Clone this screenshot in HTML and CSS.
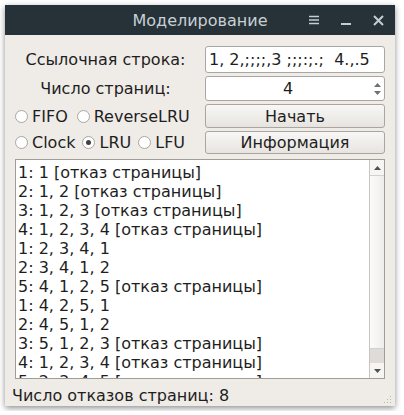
FILE: index.html
```html
<!DOCTYPE html>
<html lang="ru">

<head>
    <meta charset="UTF-8">
    <meta name="viewport" content="width=device-width, initial-scale=1.0">
    <link rel="stylesheet" href="styles.css">
</head>

<body>
    <div class="window">
        <div class="titlebar">
            <span></span>
            <span class="title">Моделирование</span>
            <div class="controls">
                <svg width="10" height="10" viewBox="0 0 10 10"><path d="M0 1.5h10M0 5h10M0 8.5h10" stroke="#c3cdd2" stroke-width="1.6"/></svg>
                <svg width="10" height="10" viewBox="0 0 10 10"><path d="M0 9h10" stroke="#c3cdd2" stroke-width="2"/></svg>
                <svg width="11" height="11" viewBox="0 0 11 11"><path d="M1 1l9 9M10 1l-9 9" stroke="#c3cdd2" stroke-width="2"/></svg>
            </div>
        </div>

        <div class="content">
            <div class="form">
                <span class="field-label">Ссылочная строка:</span>
                <div class="input">1, 2,;;;;,3 ;;;:;.;&nbsp;&nbsp;4.,.5</div>

                <span class="field-label">Число страниц:</span>
                <div class="input spin">
                    <span class="spin-value">4</span>
                    <div class="spin-arrows">
                        <svg width="7" height="4" viewBox="0 0 7 4"><path d="M0 4L3.5 0L7 4z" fill="#707070"/></svg>
                        <svg width="7" height="4" viewBox="0 0 7 4"><path d="M0 0L3.5 4L7 0z" fill="#707070"/></svg>
                    </div>
                </div>

                <div class="radios">
                    <label class="radio"><span class="dot"></span>FIFO</label>
                    <label class="radio"><span class="dot"></span>ReverseLRU</label>
                </div>
                <button class="btn">Начать</button>

                <div class="radios tight">
                    <label class="radio"><span class="dot"></span>Clock</label>
                    <label class="radio"><span class="dot checked"></span>LRU</label>
                    <label class="radio"><span class="dot"></span>LFU</label>
                </div>
                <button class="btn">Информация</button>
            </div>

            <div class="log">
                <div class="lines">
                    <div>1: 1 [отказ страницы]</div>
                    <div>2: 1, 2 [отказ страницы]</div>
                    <div>3: 1, 2, 3 [отказ страницы]</div>
                    <div>4: 1, 2, 3, 4 [отказ страницы]</div>
                    <div>1: 2, 3, 4, 1</div>
                    <div>2: 3, 4, 1, 2</div>
                    <div>5: 4, 1, 2, 5 [отказ страницы]</div>
                    <div>1: 4, 2, 5, 1</div>
                    <div>2: 4, 5, 1, 2</div>
                    <div>3: 5, 1, 2, 3 [отказ страницы]</div>
                    <div>4: 1, 2, 3, 4 [отказ страницы]</div>
                    <div>5: 2, 3, 4, 5 [отказ страницы]</div>
                </div>
                <div class="scrollbar">
                    <div class="arrow">
                        <svg width="7" height="4" viewBox="0 0 7 4"><path d="M0 4L3.5 0L7 4z" fill="#505050"/></svg>
                    </div>
                    <div class="thumb"></div>
                    <div class="track"></div>
                    <div class="arrow">
                        <svg width="7" height="4" viewBox="0 0 7 4"><path d="M0 0L3.5 4L7 0z" fill="#505050"/></svg>
                    </div>
                </div>
            </div>
        </div>

        <div class="status">
            <span>Число отказов страниц: 8</span>
            <svg class="grip" width="9" height="9" viewBox="0 0 9 9">
                <g fill="#b8b4b0">
                    <rect x="7" y="1" width="1" height="1"/>
                    <rect x="4" y="4" width="1" height="1"/><rect x="7" y="4" width="1" height="1"/>
                    <rect x="1" y="7" width="1" height="1"/><rect x="4" y="7" width="1" height="1"/><rect x="7" y="7" width="1" height="1"/>
                </g>
            </svg>
        </div>
    </div>
</body>

</html>
```

FILE: styles.css
```css
/* Page around the window */
body {
    margin: 0;
    background: #ffffff;
    font-family: "DejaVu Sans", sans-serif;
    font-size: 16px;
    color: #1e1e1e;
}

/* The window itself */
.window {
    margin: 5px;
    width: 390px;
    height: 401px;
    background: #efebe7;
    display: flex;
    flex-direction: column;
    box-shadow: 0 2px 6px rgba(0, 0, 0, 0.45);
}

/* Dark title bar */
.titlebar {
    height: 30px;
    background: #263238;
    display: grid;
    grid-template-columns: 1fr auto 1fr;
    align-items: center;
}

.title {
    color: #c6d0d5;
    font-size: 16px;
}

.controls {
    justify-self: end;
    display: flex;
    align-items: center;
    gap: 22px;
    padding-right: 11px;
}

/* Main area */
.content {
    flex: 1;
    display: flex;
    flex-direction: column;
    padding: 11px 10px 0 10px;
}

/* Form grid: labels on the left, fields on the right */
.form {
    display: grid;
    grid-template-columns: 1fr 180px;
    grid-template-rows: 27px 25px 24px 23px;
    row-gap: 3px;
    column-gap: 5px;
    align-items: center;
}

.field-label {
    text-align: center;
    padding-right: 4px;
}

.input {
    height: 100%;
    box-sizing: border-box;
    background: #ffffff;
    border: 1px solid #aaa6a2;
    border-radius: 3px;
    padding: 0 3px;
    display: flex;
    align-items: center;
    white-space: nowrap;
    overflow: hidden;
}

.spin {
    padding: 0;
}

.spin-value {
    flex: 1;
    text-align: center;
}

.spin-arrows {
    width: 14px;
    height: 100%;
    display: flex;
    flex-direction: column;
    justify-content: center;
    align-items: center;
    gap: 4px;
}

/* Radio buttons */
.radios {
    display: flex;
    align-items: center;
    gap: 9px;
}

.radios.tight {
    gap: 7px;
}

.radio {
    display: flex;
    align-items: center;
    gap: 4px;
}

.dot {
    width: 11px;
    height: 11px;
    border: 1px solid #aaa6a2;
    border-radius: 50%;
    background: #ffffff;
    display: flex;
    align-items: center;
    justify-content: center;
}

.dot.checked::after {
    content: "";
    width: 5px;
    height: 5px;
    border-radius: 50%;
    background: #404040;
}

/* Push buttons */
.btn {
    height: 100%;
    font: inherit;
    color: inherit;
    background: linear-gradient(#f8f7f5, #e7e4e0);
    border: 1px solid #a9a5a1;
    border-radius: 3px;
    padding: 0;
}

/* Log box */
.log {
    margin-top: 5px;
    height: 220px;
    box-sizing: border-box;
    background: #ffffff;
    border: 1px solid #a09c98;
    display: flex;
    overflow: hidden;
}

.lines {
    flex: 1;
    overflow: hidden;
    padding: 3px 2px 0 2px;
    line-height: 19px;
    white-space: nowrap;
}

.scrollbar {
    width: 14px;
    border-left: 1px solid #c8c4c0;
    display: flex;
    flex-direction: column;
}

.arrow {
    height: 15px;
    display: flex;
    align-items: center;
    justify-content: center;
    background: #f6f5f3;
}

.thumb {
    flex: 1;
    background: linear-gradient(90deg, #fbfbfa, #efedeb);
    border-top: 1px solid #d4d0cc;
    border-bottom: 1px solid #d4d0cc;
}

.track {
    height: 14px;
    background: #dedbd8;
}

/* Status bar */
.status {
    height: 27px;
    flex-shrink: 0;
    display: flex;
    align-items: center;
    justify-content: space-between;
    padding: 6px 3px 0 7px;
    box-sizing: border-box;
}

.grip {
    align-self: flex-end;
    margin-bottom: 2px;
}
```
